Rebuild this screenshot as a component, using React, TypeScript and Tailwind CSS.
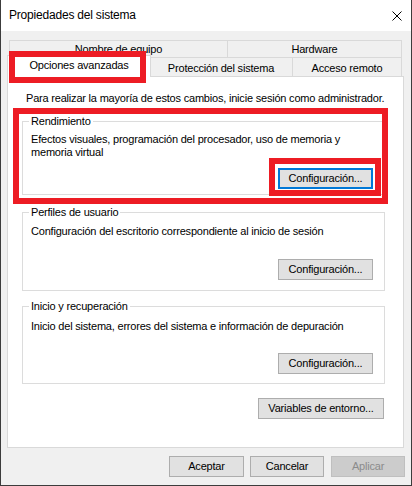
import React from 'react';

type ButtonProps = {
  label: string;
  width: string;
  focused?: boolean;
  disabled?: boolean;
  className?: string;
};

const DialogButton: React.FC<ButtonProps> = ({ label, width, focused, disabled, className = '' }) => {
  let look = 'border border-[#adadad] bg-[#e1e1e1] text-black';
  if (focused) look = 'border-2 border-[#0078d7] bg-[#e1e1e1] text-black';
  if (disabled) look = 'border border-[#bfbfbf] bg-[#cccccc] text-[#8b8b8b]';
  return (
    <button
      type="button"
      disabled={disabled}
      className={`${width} h-[21px] flex items-center justify-center shrink-0 ${look} ${className}`}
    >
      {label}
    </button>
  );
};

const GroupBox: React.FC<{
  title: string;
  className: string;
  bodyClass: string;
  buttonClass: string;
  text: React.ReactNode;
  focused?: boolean;
}> = ({ title, className, bodyClass, buttonClass, text, focused }) => (
  <fieldset className={`border border-[#dcdcdc] ${className}`}>
    <legend className="ml-[6px] px-[2px]">{title}</legend>
    <div className={`pl-[8px] pr-[11px] ${bodyClass}`}>
      <p>{text}</p>
      <div className={`flex justify-end ${buttonClass}`}>
        <DialogButton label="Configuración..." width="w-[95px]" focused={focused} />
      </div>
    </div>
  </fieldset>
);

export default function App() {
  return (
    <div className="relative w-[412px] h-[486px] overflow-hidden bg-[#f0f0f0] border-x border-b border-[#3c3c3c] font-['Liberation_Sans',Arial,sans-serif] text-[11px] leading-[13px] tracking-[-0.2px] text-black">
      {/* Title bar */}
      <header className="h-[31px] bg-white flex items-center justify-between pl-[8px] pr-[9px]">
        <span className="text-[12px] leading-[15px]">Propiedades del sistema</span>
        <svg width="10" height="10" viewBox="0 0 10 10" className="shrink-0">
          <path d="M0.5 0.5 L9.5 9.5 M9.5 0.5 L0.5 9.5" stroke="#000" strokeWidth="1" fill="none" />
        </svg>
      </header>

      <div className="pl-[6px] pr-[7px] pt-[9px]">
        {/* Tabs, back row */}
        <div className="flex mx-[2px] h-[17px]">
          <div className="w-[219px] border border-b-0 border-[#d9d9d9] flex justify-center pt-[2px]">
            Nombre de equipo
          </div>
          <div className="w-[174px] border-t border-r border-[#d9d9d9] flex justify-center pt-[2px]">
            Hardware
          </div>
        </div>

        {/* Tabs, front row */}
        <div className="flex items-end h-[19px] mr-[2px]">
          <div className="relative z-10 w-[144px] h-[22px] -mb-px -mr-[2px] bg-white border border-b-0 border-[#d9d9d9] flex justify-center pt-[3px]">
            Opciones avanzadas
          </div>
          <div className="w-[144px] h-full border border-b-0 border-[#d9d9d9] flex justify-center pt-[4px]">
            Protección del sistema
          </div>
          <div className="w-[109px] h-full border-t border-r border-[#d9d9d9] flex justify-center pt-[4px]">
            Acceso remoto
          </div>
        </div>

        {/* Tab page */}
        <div className="h-[372px] bg-white border border-[#d9d9d9] pl-[14px] pt-[15px]">
          <p className="ml-[4px]">Para realizar la mayoría de estos cambios, inicie sesión como administrador.</p>
          <div className="w-[363px]">
            <GroupBox
              title="Rendimiento"
              className="mt-[10px]"
              bodyClass="pt-[5px] pb-[5px]"
              buttonClass="mt-[9px]"
              focused
              text={
                <>
                  Efectos visuales, programación del procesador, uso de memoria y
                  <br />
                  memoria virtual
                </>
              }
            />
            <GroupBox
              title="Perfiles de usuario"
              className="mt-[11px]"
              bodyClass="pt-[6px] pb-[10px]"
              buttonClass="mt-[21px]"
              text="Configuración del escritorio correspondiente al inicio de sesión"
            />
            <GroupBox
              title="Inicio y recuperación"
              className="mt-[9px]"
              bodyClass="pt-[7px] pb-[9px]"
              buttonClass="mt-[20px]"
              text="Inicio del sistema, errores del sistema e información de depuración"
            />
            <div className="flex justify-end mt-[14px] mr-[1px]">
              <DialogButton label="Variables de entorno..." width="w-[126px]" />
            </div>
          </div>
        </div>

        {/* Dialog buttons */}
        <div className="flex justify-end mt-[8px] -mr-[1px]">
          <DialogButton label="Aceptar" width="w-[75px]" />
          <DialogButton label="Cancelar" width="w-[74px]" className="ml-[6px]" />
          <DialogButton label="Aplicar" width="w-[74px]" className="ml-[7px]" disabled />
        </div>
      </div>

      {/* Red annotation boxes */}
      <div className="pointer-events-none absolute left-[8px] top-[51px] w-[137px] h-[32px] border-[6px] border-[#ed1c24] z-20" />
      <div className="pointer-events-none absolute left-[12px] top-[108px] w-[375px] h-[96px] border-[6px] border-[#ed1c24] z-20" />
      <div className="pointer-events-none absolute left-[268px] top-[158px] w-[112px] h-[38px] border-[6px] border-[#ed1c24] z-20" />
    </div>
  );
}
